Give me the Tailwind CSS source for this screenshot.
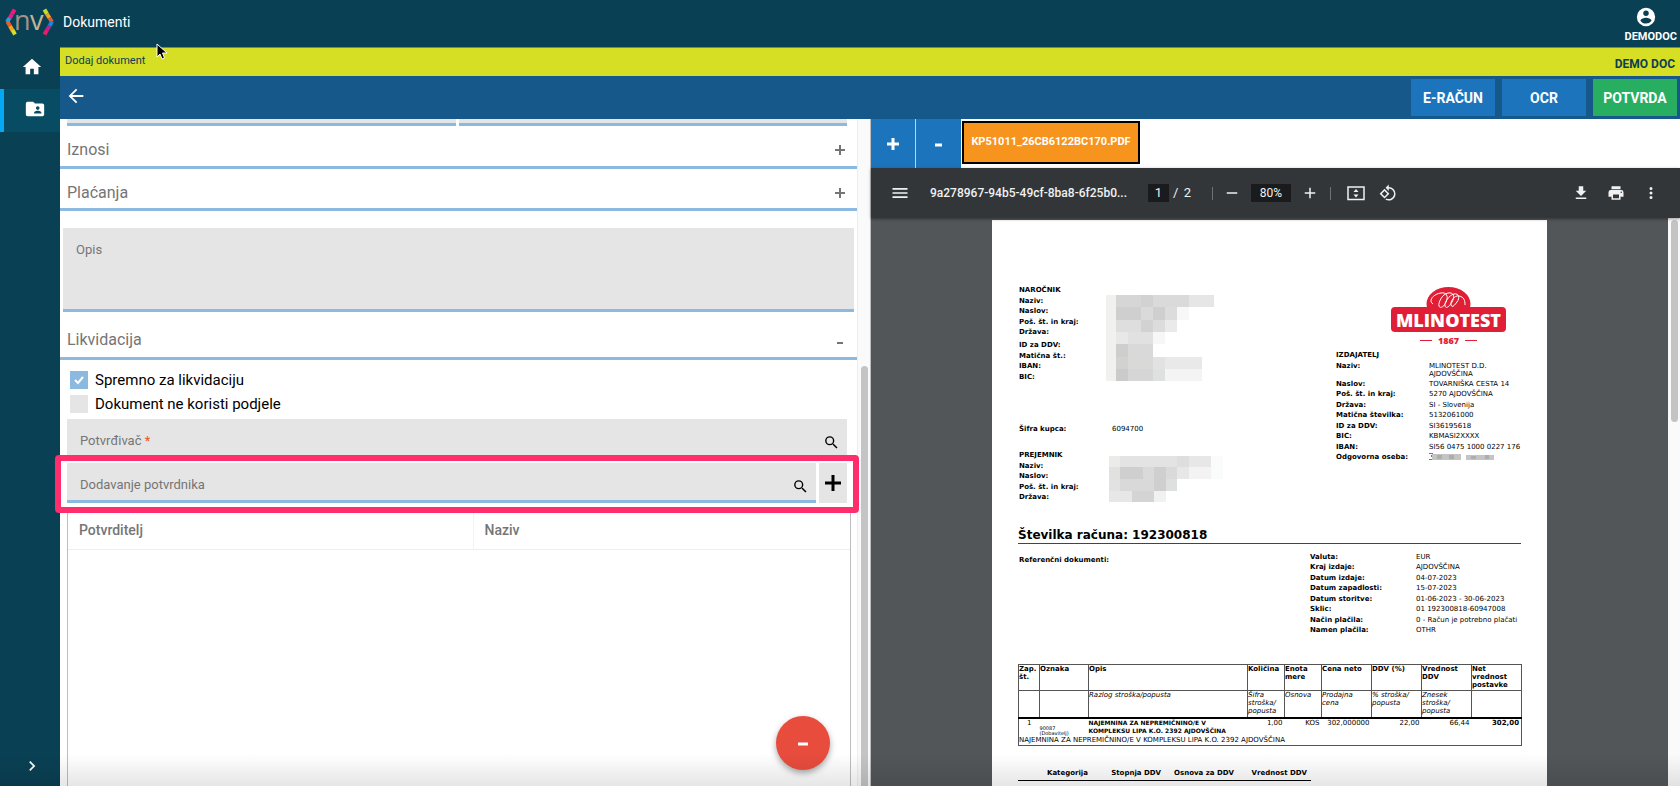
<!DOCTYPE html>
<html lang="hr">
<head>
    <meta charset="UTF-8">
    <meta name="viewport" content="width=device-width, initial-scale=1.0">
    <title>Dokumenti - Dodaj dokument</title>
    <script src="https://cdn.jsdelivr.net/npm/@tailwindcss/browser@4"></script>
</head>
<body class="h-screen flex flex-col overflow-hidden bg-white font-['Roboto',sans-serif]">
    <header class="h-[47px] shrink-0 bg-[#0a4054] text-white flex items-center justify-between pl-1 pr-[3px] pb-[3px]">
        <div class="flex items-center gap-2">
            <svg class="w-[51px] h-[40px]" viewBox="0 -5 51 40">
                <g fill="none" stroke-width="4">
                    <path d="M10.500 2.500L8 7" stroke="#ec1c7b"/>
                    <path d="M8 7L5.500 11.500" stroke="#e01e8c"/>
                    <path d="M5.500 11L3 15" stroke="#1ba6e0"/>
                    <path d="M3.500 14.500L6 19" stroke="#f15a29"/>
                    <path d="M6 19L8.500 23.500" stroke="#f7a11f"/>
                    <path d="M8.500 23L11 27.500" stroke="#d6df23"/>
                    <path d="M40.500 2.500L43 7" stroke="#c5dc2c"/>
                    <path d="M43 7L45.500 11" stroke="#f7a11f"/>
                    <path d="M45.500 11L48 15" stroke="#f15a29"/>
                    <path d="M48 14.500L45.500 19" stroke="#1b86d8"/>
                    <path d="M45.500 19L43 23" stroke="#c21f8e"/>
                    <path d="M43 23L40.500 27.500" stroke="#ec1c6b"/>
                </g>
                <text x="10" y="23" font-size="27" font-family="Open Sans" fill="#a3928a">n</text>
                <text x="26" y="23" font-size="27" font-family="Open Sans" fill="#c2b597">v</text>
            </svg>
            <span class="text-sm">Dokumenti</span>
        </div>
        <button class="flex flex-col items-center pt-[7px]">
            <svg class="w-[22px] h-[22px] mr-[10px]" viewBox="0 0 24 24" fill="currentColor"><path d="M12 2a10 10 0 1 0 0 20 10 10 0 0 0 0-20zm0 3a3 3 0 1 1 0 6 3 3 0 0 1 0-6zm0 14.200a7.200 7.200 0 0 1-6-3.220c.03-1.990 4-3.080 6-3.080s5.970 1.090 6 3.080a7.200 7.200 0 0 1-6 3.220z"/></svg>
            <span class="text-[11px] leading-[18px] font-bold">DEMODOC</span>
        </button>
    </header>

    <div class="flex flex-1 min-h-0">
        <!-- Sidebar -->
        <nav class="w-[60px] shrink-0 bg-[#0a4054] text-white flex flex-col">
            <a href="#" class="h-[42px] flex items-center justify-center pl-[3px] pb-[2px]" aria-label="Home">
                <svg class="w-[22px] h-[22px]" viewBox="0 0 24 24" fill="currentColor"><path d="M10 20v-6h4v6h5v-8h3L12 3 2 12h3v8z"/></svg>
            </a>
            <a href="#" class="h-[43px] flex items-center justify-center pl-[6px] pb-[3px] bg-[#084c63] border-l-4 border-[#03a9f4]" aria-label="Dokumenti">
                <svg class="w-[22px] h-[22px]" viewBox="0 0 24 24" fill="currentColor"><path d="M20 6h-8l-2-2H4a2 2 0 0 0-2 2v12a2 2 0 0 0 2 2h16a2 2 0 0 0 2-2V8a2 2 0 0 0-2-2zm-5 3a2 2 0 1 1 0 4 2 2 0 0 1 0-4zm4 8h-8v-1c0-1.330 2.670-2 4-2s4 .67 4 2v1z"/></svg>
            </a>
            <button class="mt-auto mb-[10px] flex justify-center pl-1" aria-label="Otvori izbornik">
                <svg class="w-5 h-5" viewBox="0 0 24 24" fill="currentColor"><path d="M10 6 8.590 7.410 13.170 12l-4.580 4.590L10 18l6-6z"/></svg>
            </button>
        </nav>

        <main class="flex-1 min-w-0 flex flex-col">
            <div class="h-[29px] shrink-0 bg-[#d6df23] border-t border-[#6f8f3c] text-[#0a4054] flex items-center justify-between px-[5px]">
                <h1 class="text-[11px] pb-[2px]">Dodaj dokument</h1>
                <span class="text-xs font-bold pt-[3px]">DEMO DOC</span>
            </div>
            <div class="h-[43px] shrink-0 bg-[#16588a] text-white flex items-center justify-between pl-[5px] pr-[3px]">
                <button aria-label="Natrag" class="pb-1">
                    <svg class="w-[22px] h-[22px]" viewBox="0 0 24 24" fill="currentColor"><path d="M20 11H7.830l5.590-5.590L12 4l-8 8 8 8 1.410-1.410L7.830 13H20z"/></svg>
                </button>
                <div class="flex gap-[7px]">
                    <button class="w-[84px] h-[37px] bg-[#1c75bc] text-sm font-bold">E-RAČUN</button>
                    <button class="w-[84px] h-[37px] bg-[#1c75bc] text-sm font-bold">OCR</button>
                    <button class="w-[84px] h-[37px] bg-[#27ae60] text-sm font-bold">POTVRDA</button>
                </div>
            </div>

            <div class="flex-1 min-h-0 grid grid-cols-2">
                <!-- Form -->
                <section class="relative flex min-h-0">
                    <form class="flex-1 min-w-0 flex flex-col text-[#757575]">
                        <div class="flex gap-[3px] pl-[7px] pr-[10px] shrink-0">
                            <div class="flex-1 h-[7px] bg-[#e5e5e5] border-b-[3px] border-[#8cb9e0]"></div>
                            <div class="flex-1 h-[7px] bg-[#e5e5e5] border-b-[3px] border-[#8cb9e0]"></div>
                        </div>
                        <button type="button" class="h-[43px] shrink-0 flex items-center justify-between pl-[7px] pr-[11px] pt-2 border-b-[3px] border-[#8cb9e0]">
                            <span class="text-base">Iznosi</span>
                            <svg class="w-3 h-3" viewBox="0 0 12 12" stroke="currentColor" stroke-width="2"><path d="M6 1v10M1 6h10"/></svg>
                        </button>
                        <button type="button" class="h-[42px] shrink-0 flex items-center justify-between pl-[7px] pr-[11px] pt-2 border-b-[3px] border-[#8cb9e0]">
                            <span class="text-base">Plaćanja</span>
                            <svg class="w-3 h-3" viewBox="0 0 12 12" stroke="currentColor" stroke-width="2"><path d="M6 1v10M1 6h10"/></svg>
                        </button>
                        <textarea aria-label="Opis" placeholder="Opis" class="block mt-[17px] mx-[3px] h-[84px] shrink-0 resize-none bg-[#e5e5e5] border-b-[3px] border-[#8cb9e0] px-[13px] py-3 text-[13px] placeholder:text-[#757575]"></textarea>
                        <button type="button" class="h-[48px] shrink-0 flex items-center justify-between pl-[7px] pr-[11px] pt-[10px] border-b-[3px] border-[#8cb9e0]">
                            <span class="text-base">Likvidacija</span>
                            <svg class="w-3 h-3" viewBox="0 0 12 12" stroke="currentColor" stroke-width="2"><path d="M3 9h6"/></svg>
                        </button>

                        <div class="flex flex-col gap-[6px] mt-[11px] pl-[10px] text-[15px] text-black">
                            <label class="flex items-center gap-[7px] h-[18px]">
                                <span class="relative w-[18px] h-[18px]">
                                    <input type="checkbox" checked class="block appearance-none w-[18px] h-[18px] bg-[#e5e5e5] checked:bg-[#8cb9e0]">
                                    <svg class="absolute inset-0 p-1 text-white" viewBox="0 0 10 10" fill="none" stroke="currentColor" stroke-width="2"><path d="M1 5l3 3 5-6"/></svg>
                                </span>
                                Spremno za likvidaciju
                            </label>
                            <label class="flex items-center gap-[7px] h-[18px]">
                                <input type="checkbox" class="block appearance-none w-[18px] h-[18px] bg-[#e5e5e5] checked:bg-[#8cb9e0]">
                                Dokument ne koristi podjele
                            </label>
                        </div>

                        <div class="pl-[7px] pr-[10px] mt-[6px] text-[13px] flex flex-col gap-1">
                            <div class="flex items-center h-10 bg-[#e5e5e5] border-b-[3px] border-[#8cb9e0] pl-[13px] pr-[7px] pt-[6px]">
                                <label for="potvrdivac">Potvrđivač <span class="text-[#f4511e]">*</span></label>
                                <input id="potvrdivac" type="text" class="flex-1 min-w-0 bg-transparent outline-none">
                                <button type="button" aria-label="Traži" class="text-black pt-1">
                                    <svg class="w-[17px] h-[17px]" viewBox="0 0 24 24" fill="currentColor"><path d="M15.500 14h-.79l-.28-.27A6.470 6.470 0 0 0 16 9.500 6.500 6.500 0 1 0 9.500 16c1.610 0 3.090-.59 4.230-1.570l.27.28v.79l5 4.990L20.490 19l-4.990-5zm-6 0a4.500 4.500 0 1 1 0-9 4.500 4.500 0 0 1 0 9z"/></svg>
                                </button>
                            </div>
                            <div class="relative flex gap-[3px]">
                                <div class="flex-1 flex items-center h-10 bg-[#e5e5e5] border-b-[3px] border-[#8cb9e0] pl-[13px] pr-[7px] pt-[6px]">
                                    <label for="dodavanje">Dodavanje potvrdnika</label>
                                    <input id="dodavanje" type="text" class="flex-1 min-w-0 bg-transparent outline-none">
                                    <button type="button" aria-label="Traži" class="text-black pt-1">
                                        <svg class="w-[17px] h-[17px]" viewBox="0 0 24 24" fill="currentColor"><path d="M15.500 14h-.79l-.28-.27A6.470 6.470 0 0 0 16 9.500 6.500 6.500 0 1 0 9.500 16c1.610 0 3.090-.59 4.230-1.570l.27.28v.79l5 4.990L20.490 19l-4.990-5zm-6 0a4.500 4.500 0 1 1 0-9 4.500 4.500 0 0 1 0 9z"/></svg>
                                    </button>
                                </div>
                                <button type="button" aria-label="Dodaj" class="w-7 h-10 bg-[#e5e5e5] text-black flex items-center justify-center">
                                    <svg class="w-4 h-4" viewBox="0 0 16 16" stroke="currentColor" stroke-width="3"><path d="M8 0v16M0 8h16"/></svg>
                                </button>
                                <div class="absolute -inset-x-3 -top-2 -bottom-[10px] border-[6px] border-[#ff2d6b] rounded-sm pointer-events-none z-10"></div>
                            </div>
                        </div>

                        <div class="flex-1 min-h-0 ml-[7px] mr-[6px] mt-1 border-x border-[#bdbdbd]">
                            <table class="w-full table-fixed text-sm">
                                <thead>
                                    <tr class="h-[42px] border-b border-[#eeeeee]">
                                        <th class="w-[405px] text-left font-medium pl-[11px] pt-1 border-r border-[#f3f3f3]">Potvrditelj</th>
                                        <th class="text-left font-medium pl-[11px] pt-1">Naziv</th>
                                    </tr>
                                </thead>
                                <tbody></tbody>
                            </table>
                        </div>
                    </form>
                    <!-- Scrollbar -->
                    <div class="w-[13px] bg-[#fafafa] border-l border-[#ededed] flex justify-center">
                        <div class="w-[7px] mt-[247px] rounded-t-full bg-[#c4c4c4]"></div>
                    </div>
                    <button class="absolute right-10 bottom-4 w-[54px] h-[54px] rounded-full bg-[#e74c3c] shadow-[0_3px_6px_rgba(0,0,0,0.35)] text-white flex items-center justify-center" aria-label="Ukloni">
                        <svg class="w-[10px] h-[10px]" viewBox="0 0 10 10" stroke="currentColor" stroke-width="3"><path d="M0 6h10"/></svg>
                    </button>
                </section>

                <!-- PDF viewer -->
                <section class="min-w-0 min-h-0 flex flex-col border-l border-[#bdbdbd]">
                    <div class="flex h-[49px] shrink-0 text-white">
                        <button aria-label="Uvećaj" class="w-[45px] bg-[#1c75bc] border-r border-white/70 flex items-center justify-center">
                            <svg class="w-3 h-3" viewBox="0 0 12 12" stroke="currentColor" stroke-width="3"><path d="M6 0v12M0 6h12"/></svg>
                        </button>
                        <button aria-label="Umanji" class="w-[45px] bg-[#1c75bc] flex items-center justify-center">
                            <svg class="w-3 h-3" viewBox="0 0 12 12" stroke="currentColor" stroke-width="3"><path d="M2 7h7"/></svg>
                        </button>
                        <button class="ml-px mt-[2px] w-[178px] h-[43px] border-2 border-black bg-[#f7941e] text-[11px] font-bold">KP51011_26CB6122BC170.PDF</button>
                    </div>

                    <div class="relative z-10 h-[50px] shrink-0 bg-[#323639] text-[#f1f1f1] shadow-[0_1px_3px_rgba(0,0,0,0.4)] flex items-center text-[13px] pl-[19px] pr-4">
                        <button aria-label="Izbornik"><svg class="w-5 h-5" viewBox="0 0 24 24" fill="currentColor"><path d="M3 18h18v-2H3v2zm0-5h18v-2H3v2zm0-7v2h18V6H3z"/></svg></button>
                        <span class="ml-5 w-[199px] whitespace-nowrap text-xs font-medium">9a278967-94b5-49cf-8ba8-6f25b0...</span>
                        <input aria-label="Stranica" value="1" class="ml-[19px] w-[21px] h-[18px] bg-[#191b1c] text-center">
                        <span class="ml-1 w-[18px] flex justify-between"><span>/</span><span>2</span></span>
                        <span class="ml-[21px] w-px h-[13px] bg-white/30"></span>
                        <button aria-label="Smanji" class="ml-[10px]"><svg class="w-[18px] h-[18px]" viewBox="0 0 24 24" fill="currentColor"><path d="M19 13H5v-2h14z"/></svg></button>
                        <input aria-label="Zum" value="80%" class="ml-[10px] w-10 h-[18px] bg-[#191b1c] text-center text-xs">
                        <button aria-label="Povećaj" class="ml-[10px]"><svg class="w-[18px] h-[18px]" viewBox="0 0 24 24" fill="currentColor"><path d="M19 13h-6v6h-2v-6H5v-2h6V5h2v6h6z"/></svg></button>
                        <span class="ml-[11px] w-px h-[13px] bg-white/30"></span>
                        <button aria-label="Prilagodi stranici" class="ml-4"><svg class="w-[18px] h-[18px]" viewBox="0 0 18 18"><path d="M1 3h16v12.500H1z" fill="none" stroke="currentColor" stroke-width="1.500"/><path d="M9 5l2.500 3h-5zM9 13.500l2.500-3h-5z" fill="currentColor"/></svg></button>
                        <button aria-label="Rotiraj" class="ml-[14px]"><svg class="w-[18px] h-[18px]" viewBox="0 0 24 24" fill="currentColor"><path d="M7.340 6.410.86 12.900l6.490 6.480 6.490-6.480-6.500-6.490zM3.690 12.900l3.660-3.660L11 12.900l-3.660 3.660-3.650-3.660zm15.670-6.260A8.950 8.950 0 0 0 13 4V.760L8.760 5 13 9.240V6a7 7 0 1 1-3.070 13.290l-1.490 1.490A8.980 8.980 0 0 0 22 13a8.970 8.970 0 0 0-2.640-6.360z"/></svg></button>
                        <div class="ml-auto flex gap-[17px] pr-1">
                            <button aria-label="Preuzmi"><svg class="w-[18px] h-[18px]" viewBox="0 0 24 24" fill="currentColor"><path d="M19 9h-4V3H9v6H5l7 7 7-7zM5 18v2h14v-2H5z"/></svg></button>
                            <button aria-label="Ispis"><svg class="w-[18px] h-[18px]" viewBox="0 0 24 24" fill="currentColor"><path d="M19 8H5a3 3 0 0 0-3 3v6h4v4h12v-4h4v-6a3 3 0 0 0-3-3zm-3 11H8v-5h8v5zm3-7a1 1 0 1 1 0-2 1 1 0 0 1 0 2zm-1-9H6v4h12V3z"/></svg></button>
                            <button aria-label="Više"><svg class="w-[18px] h-[18px]" viewBox="0 0 24 24" fill="currentColor"><path d="M12 8a2 2 0 1 0 0-4 2 2 0 0 0 0 4zm0 2a2 2 0 1 0 0 4 2 2 0 0 0 0-4zm0 6a2 2 0 1 0 0 4 2 2 0 0 0 0-4z"/></svg></button>
                        </div>
                    </div>

                    <div class="flex-1 min-h-0 flex bg-[#525659]">
                        <div class="flex-1 min-w-0 flex justify-center overflow-hidden">
                            <!-- Invoice -->
                            <article class="w-[555px] shrink-0 mt-[2px] bg-white text-black font-['DejaVu_Sans',sans-serif] text-[7px] leading-[10px] px-[26px]">
                                <div class="flex justify-between h-[306px] pt-[65px] pl-px">
                                    <div>
                                        <div class="flex gap-[22px]">
                                            <div class="w-[65px] font-bold whitespace-nowrap">
                                                <div class="flex flex-col justify-between h-[52px]">
                                                    <p>NAROČNIK</p><p>Naziv:</p><p>Naslov:</p><p>Poš. št. in kraj:</p><p>Država:</p>
                                                </div>
                                                <div class="flex flex-col justify-between h-[42px] mt-[3px]">
                                                    <p>ID za DDV:</p><p>Matična št.:</p><p>IBAN:</p><p>BIC:</p>
                                                </div>
                                            </div>
                                            <svg class="w-[108px] h-[86px] mt-[10px]" viewBox="348 74 324 258" preserveAspectRatio="none" shape-rendering="crispEdges">
                                                <path fill="#f1f1f0" d="M348 74h30v258h-30z"/>
                                                <path fill="#d6d6d6" d="M378 74h74v37h-74z"/><path fill="#d2d2d2" d="M452 74h36v37h-36z"/><path fill="#dadada" d="M488 74h110v37H488z"/><path fill="#e6e6e6" d="M598 74h74v37h-74z"/>
                                                <path fill="#cfcfcf" d="M378 111h74v37h-74z"/><path fill="#dadada" d="M452 111h36v37h-36z"/><path fill="#cfcfcf" d="M488 111h37v37h-37z"/><path fill="#dcdcdc" d="M525 111h37v37h-37z"/><path fill="#f8f8f8" d="M562 111h36v37h-36z"/>
                                                <path fill="#dedede" d="M378 148h74v37h-74z"/><path fill="#d2d2d2" d="M452 148h36v37h-36z"/><path fill="#dcdcdc" d="M488 148h37v37h-37z"/><path fill="#eaeaea" d="M525 148h37v37h-37z"/>
                                                <path fill="#e8e8e8" d="M378 185h37v37h-37z"/><path fill="#e1e1e1" d="M415 185h73v37h-73z"/><path fill="#f7f7f7" d="M488 185h37v37h-37z"/>
                                                <path fill="#cecece" d="M378 222h37v37h-37z"/><path fill="#d9d9d9" d="M415 222h73v37h-73z"/>
                                                <path fill="#d2d2d2" d="M378 259h37v37h-37z"/><path fill="#d9d9d7" d="M415 259h73v37h-73z"/><path fill="#e2e2e2" d="M488 259h37v37h-37z"/><path fill="#e9e9e9" d="M525 259h110v37H525z"/>
                                                <path fill="#cbcbcb" d="M378 296h37v36h-37z"/><path fill="#d6d6d6" d="M415 296h73v36h-73z"/><path fill="#dfe1e0" d="M488 296h37v36h-37z"/><path fill="#f4f4f4" d="M525 296h110v36H525z"/>
                                            </svg>
                                        </div>
                                        <div class="flex mt-[42px]"><p class="w-[93px] font-bold">Šifra kupca:</p><p>6094700</p></div>
                                        <div class="flex gap-[25px] mt-4">
                                            <div class="w-[65px] font-bold whitespace-nowrap flex flex-col justify-between h-[52px]">
                                                <p>PREJEMNIK</p><p>Naziv:</p><p>Naslov:</p><p>Poš. št. in kraj:</p><p>Država:</p>
                                            </div>
                                            <svg class="w-[114px] h-[46px] mt-[6px]" viewBox="357 556 342 138" preserveAspectRatio="none" shape-rendering="crispEdges">
                                                <path fill="#ebebe9" d="M357 556h34v34h-34z"/><path fill="#e3e3e3" d="M391 556h170v34H391z"/><path fill="#dedede" d="M561 556h36v34h-36z"/><path fill="#e7e7e7" d="M597 556h67v34h-67z"/><path fill="#f9fcfb" d="M664 556h35v68h-35z"/>
                                                <path fill="#e1e2df" d="M357 590h34v35h-34z"/><path fill="#cfcfcf" d="M391 590h68v35h-68z"/><path fill="#dadada" d="M459 590h34v35h-34z"/><path fill="#cfcfcf" d="M493 590h34v35h-34z"/><path fill="#dadada" d="M527 590h34v35h-34z"/><path fill="#e7e7e7" d="M561 590h36v35h-36z"/><path fill="#f3f3f3" d="M597 590h67v35h-67z"/>
                                                <path fill="#e1e2e1" d="M357 625h34v35h-34z"/><path fill="#d9d9d9" d="M391 625h102v35H391z"/><path fill="#cfcfcf" d="M493 625h34v35h-34z"/><path fill="#dde0de" d="M527 625h34v35h-34z"/>
                                                <path fill="#e7e7e7" d="M357 660h68v34h-68z"/><path fill="#d4d4d4" d="M425 660h68v34h-68z"/><path fill="#eff2f0" d="M493 660h34v34h-34z"/>
                                            </svg>
                                        </div>
                                    </div>

                                    <div class="w-[185px] pt-[2px]">
                                        <svg class="w-[115px] h-[60px] ml-[55px]" viewBox="0 0 115 60">
                                            <ellipse cx="57.500" cy="17" rx="22" ry="17" fill="#e01f36"/>
                                            <rect y="20" width="115" height="25" rx="4" fill="#e01f36"/>
                                            <path d="M42 17C37 14 42 7 50 6c5-1 8 3 5 9-2 5-6 7-7 4s3-12 9-13 7 4 4 9-6 7-7 4 4-11 9-12 6 4 3 8-5 6-6 3 3-10 8-9 6 4 6 9" fill="none" stroke="#fff" stroke-width="1"/>
                                            <text x="57.500" y="40" text-anchor="middle" font-family="Open Sans" font-weight="800" font-size="18" fill="#fff">MLINOTEST</text>
                                            <text x="57.500" y="57" text-anchor="middle" font-family="Open Sans" font-weight="800" font-size="9" fill="#e01f36">1867</text>
                                            <path d="M29 53.500h12M74 53.500h12" stroke="#e01f36"/>
                                        </svg>
                                        <p class="font-bold mt-[3px]">IZDAJATELJ</p>
                                        <div class="flex h-[19px] leading-[8px] pt-[2px] whitespace-nowrap"><p class="w-[93px] font-bold">Naziv:</p><p>MLINOTEST D.D.<br>AJDOVŠČINA</p></div>
                                        <dl class="grid grid-cols-[93px_1fr] content-between h-[83px] whitespace-nowrap">
                                            <dt class="font-bold">Naslov:</dt><dd>TOVARNIŠKA CESTA 14</dd>
                                            <dt class="font-bold">Poš. št. in kraj:</dt><dd>5270 AJDOVŠČINA</dd>
                                            <dt class="font-bold">Država:</dt><dd>SI - Slovenija</dd>
                                            <dt class="font-bold">Matična številka:</dt><dd>5132061000</dd>
                                            <dt class="font-bold">ID za DDV:</dt><dd>SI36195618</dd>
                                            <dt class="font-bold">BIC:</dt><dd>KBMASI2XXXX</dd>
                                            <dt class="font-bold">IBAN:</dt><dd>SI56 0475 1000 0227 176</dd>
                                            <dt class="font-bold">Odgovorna oseba:</dt>
                                            <dd class="flex items-center">
                                                <svg class="w-[66px] h-[7px]" viewBox="0 0 66 7" shape-rendering="crispEdges"><path fill="#777" d="M0 0h4v1H0zM0 6h4v1H0zM2 2h1v2H2z"/><path fill="#c4c4c4" d="M3 1h29v6H3zM37 2h28v5H37z"/><path fill="#adadad" d="M8 2h5v4H8zM20 2h5v4h-5zM42 3h5v3h-5zM56 2h4v4h-4z"/></svg>
                                            </dd>
                                        </dl>
                                    </div>
                                </div>

                                <h2 class="h-[18px] text-[12px] leading-[18px] font-bold border-b border-[#444]">Številka računa: 192300818</h2>
                                <div class="flex justify-between h-[120px] pt-2 pl-px">
                                    <p class="font-bold pt-[3px]">Referenčni dokumenti:</p>
                                    <dl class="grid grid-cols-[106px_105px] content-between h-[83px] whitespace-nowrap">
                                        <dt class="font-bold">Valuta:</dt><dd>EUR</dd>
                                        <dt class="font-bold">Kraj izdaje:</dt><dd>AJDOVŠČINA</dd>
                                        <dt class="font-bold">Datum izdaje:</dt><dd>04-07-2023</dd>
                                        <dt class="font-bold">Datum zapadlosti:</dt><dd>15-07-2023</dd>
                                        <dt class="font-bold">Datum storitve:</dt><dd>01-06-2023 - 30-06-2023</dd>
                                        <dt class="font-bold">Sklic:</dt><dd>01 192300818-60947008</dd>
                                        <dt class="font-bold">Način plačila:</dt><dd>0 - Račun je potrebno plačati</dd>
                                        <dt class="font-bold">Namen plačila:</dt><dd>OTHR</dd>
                                    </dl>
                                </div>

                                <table class="w-full table-fixed border-collapse border border-[#555] leading-[8px] text-left align-top">
                                    <colgroup>
                                        <col class="w-[21px]"><col class="w-[49px]"><col class="w-[159px]"><col class="w-[37px]"><col class="w-[37px]"><col class="w-[50px]"><col class="w-[50px]"><col class="w-[50px]"><col class="w-[50px]">
                                    </colgroup>
                                    <thead class="align-top">
                                        <tr class="h-[26px] border-b border-[#555]">
                                            <th class="border-r border-[#555]">Zap. št.</th>
                                            <th class="border-r border-[#555]">Oznaka</th>
                                            <th class="border-r border-[#555]">Opis</th>
                                            <th class="border-r border-[#555]">Količina</th>
                                            <th class="border-r border-[#555]">Enota mere</th>
                                            <th class="border-r border-[#555]">Cena neto</th>
                                            <th class="border-r border-[#555]">DDV (%)</th>
                                            <th class="border-r border-[#555]">Vrednost DDV</th>
                                            <th>Net vrednost postavke</th>
                                        </tr>
                                        <tr class="h-[27px] border-b-2 border-black italic">
                                            <td class="border-r border-[#555]"></td>
                                            <td class="border-r border-[#555]"></td>
                                            <td class="border-r border-[#555]">Razlog stroška/popusta</td>
                                            <td class="border-r border-[#555]">Šifra<br>stroška/<br>popusta</td>
                                            <td class="border-r border-[#555]">Osnova</td>
                                            <td class="border-r border-[#555]">Prodajna<br>cena</td>
                                            <td class="border-r border-[#555]">% stroška/<br>popusta</td>
                                            <td class="border-r border-[#555]">Znesek<br>stroška/<br>popusta</td>
                                            <td></td>
                                        </tr>
                                    </thead>
                                    <tbody class="align-top">
                                        <tr class="h-[18px]">
                                            <td class="text-center">1</td>
                                            <td class="text-[5px] leading-[5px] pt-[7px]">90087<br>(Dobavitelj)</td>
                                            <td class="text-[6px] font-bold whitespace-nowrap">NAJEMNINA ZA NEPREMIČNINO/E V<br>KOMPLEKSU LIPA K.O. 2392 AJDOVŠČINA</td>
                                            <td class="text-right pr-[2px]">1,00</td>
                                            <td class="text-right pr-[2px]">KOS</td>
                                            <td class="text-right pr-[2px]">302,000000</td>
                                            <td class="text-right pr-[2px]">22,00</td>
                                            <td class="text-right pr-[2px]">66,44</td>
                                            <td class="text-right pr-[2px] font-bold">302,00</td>
                                        </tr>
                                        <tr class="h-[10px]"><td colspan="9">NAJEMNINA ZA NEPREMIČNINO/E V KOMPLEKSU LIPA K.O. 2392 AJDOVŠČINA</td></tr>
                                    </tbody>
                                </table>

                                <table class="w-[293px] table-fixed mt-[22px]">
                                    <thead>
                                        <tr class="border-b border-black text-right whitespace-nowrap">
                                            <th class="w-[70px] pb-[2px]">Kategorija</th>
                                            <th class="w-[73px] pb-[2px]">Stopnja DDV</th>
                                            <th class="w-[73px] pb-[2px]">Osnova za DDV</th>
                                            <th class="pb-[2px] pr-1">Vrednost DDV</th>
                                        </tr>
                                    </thead>
                                </table>
                            </article>
                        </div>
                        <!-- Scrollbar -->
                        <div class="w-3 bg-[#fafafa] flex justify-center items-start">
                            <div class="w-[7px] h-[202px] mt-[2px] rounded-full bg-[#c4c4c4]"></div>
                        </div>
                    </div>
                </section>
            </div>
        </main>
    </div>

    <!-- Bottom fade -->
    <div class="absolute inset-x-0 bottom-0 h-8 bg-gradient-to-b from-black/0 to-black/10 pointer-events-none"></div>
    <!-- Mouse pointer -->
    <svg class="absolute left-[156px] top-[43px] w-[12px] h-[18px] z-20 pointer-events-none" viewBox="0 0 12 18"><path d="M1 1v13l3-3 2 5 2.500-1-2-5H11z" fill="#000" stroke="#fff"/></svg>
</body>
</html>
